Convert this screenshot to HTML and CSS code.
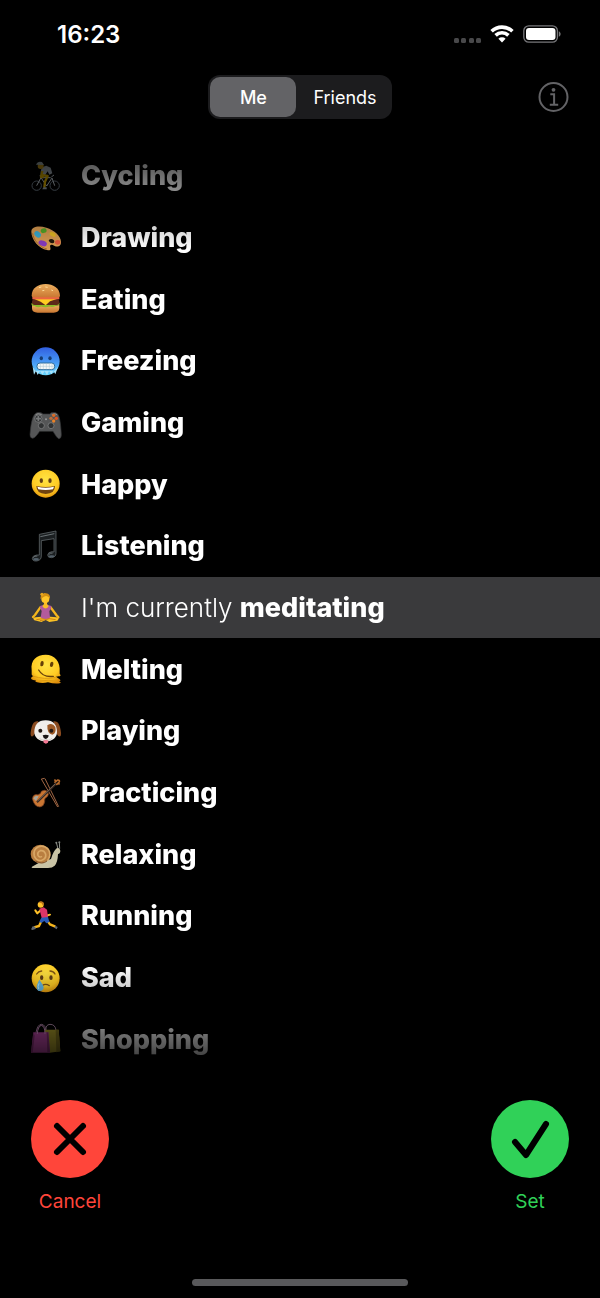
FILE: index.html
```html
<!DOCTYPE html>
<html lang="en">
<head>
    <meta charset="UTF-8">
    <meta name="viewport" content="width=device-width, initial-scale=1.0">
    <title>Status</title>
    <link rel="stylesheet" href="styles.css">
</head>
<body>
    <div class="status-bar">
        <span class="time">16:23</span>
        <div class="status-icons">
            <svg width="28" height="18" viewBox="0 0 28 18" fill="#48484a" aria-hidden="true">
                <rect x="1" y="13" width="5" height="5" rx="1.5"/><rect x="8" y="13" width="5" height="5" rx="1.5"/>
                <rect x="16" y="13" width="5" height="5" rx="1.5"/><rect x="23" y="13" width="5" height="5" rx="1.5"/>
            </svg>
            <svg width="24" height="18" viewBox="0 0 24 18" fill="none" stroke="#fff" stroke-width="3.6" aria-hidden="true">
                <path d="M1.6 6.3a15 15 0 0 1 20.8 0"/>
                <path d="M5.6 10.4a9.2 9.2 0 0 1 12.8 0"/>
                <path d="M12 17.6l-3.6-3.8a5.1 5.1 0 0 1 7.2 0z" fill="#fff" stroke="none"/>
            </svg>
            <svg width="38" height="18" viewBox="0 0 38 18" aria-hidden="true">
                <rect x=".8" y=".8" width="33.6" height="16.4" rx="5" fill="none" stroke="#77777a" stroke-width="1.3"/>
                <rect x="3" y="3" width="29.5" height="12" rx="3" fill="#fff"/>
                <path d="M35.8 6.2c2.4 1 2.4 4.6 0 5.6z" fill="#77777a"/>
            </svg>
        </div>
    </div>

    <div class="toolbar">
        <div class="segmented">
            <button class="segment active" type="button" aria-pressed="true">Me</button>
            <button class="segment" type="button" aria-pressed="false">Friends</button>
        </div>
        <button class="info-btn" type="button" aria-label="Info">
            <svg width="31" height="31" viewBox="0 0 31 31" fill="none" stroke="#636366" stroke-width="2">
                <circle cx="15.5" cy="15" r="14"/>
                <path d="M12.3 12.3h3.8v10M11.8 22.8h8.4"/>
                <circle cx="15.5" cy="7.8" r="1.9" fill="#636366" stroke="none"/>
            </svg>
        </button>
    </div>

    <ul class="activity-list">
        <li><button class="activity" type="button">
            <svg class="emoji" viewBox="0 0 90 90" aria-hidden="true">
                <g fill="none" stroke="#65727e" stroke-width="3"><circle cx="17" cy="74" r="14"/><circle cx="71" cy="74" r="14"/></g>
                <path d="M17 74l13-24 17 25 16-24 8 23M30 50h29M26 44h9M61 48l8-6" fill="none" stroke="#b9c2c9" stroke-width="3"/>
                <path d="M29 32q1-15 17-18l13 6 5 17-9 4-5-10-9 13-12 1z" fill="#a0aab4"/>
                <path d="M31 42l19 3-8 17-2 18M34 30l-4 18h8" fill="none" stroke="#c9a000" stroke-width="7" stroke-linejoin="round"/>
                <path d="M37 79h10v6H34z" fill="#8b969c"/>
                <circle cx="29" cy="15" r="9" fill="#c69a17"/>
                <path d="M15 11Q20-1 33 3l6 9z" fill="#a9b8bd"/>
            </svg>
            <strong>Cycling</strong></button></li>
        <li><button class="activity" type="button">
            <svg class="emoji" viewBox="0 0 90 90" aria-hidden="true">
                <path d="M1 26C1 10 24 7 46 14c25 8 43 24 44 42 1 12-9 18-19 13-10-6-16-5-13 5 2 7-2 9-10 7C24 77 1 50 1 26z" fill="#d79a51"/>
                <path d="M5 31c1 19 22 43 43 47" fill="none" stroke="#a86b2c" stroke-width="3"/>
                <path d="M53 52q7-8 16 0 3 9-5 9-8 0-11-9z" fill="#201509"/>
                <ellipse cx="38" cy="23" rx="9" ry="7" fill="#54a927" transform="rotate(-20 38 23)"/>
                <ellipse cx="20" cy="34" rx="11" ry="8" fill="#38acd2" transform="rotate(40 20 34)"/>
                <ellipse cx="35" cy="61" rx="13" ry="8" fill="#873abf" transform="rotate(20 35 61)"/>
                <ellipse cx="65" cy="34" rx="10" ry="6" fill="#e6b923" transform="rotate(30 65 34)"/>
                <ellipse cx="80" cy="58" rx="8" ry="7" fill="#e2583e"/>
            </svg>
            <strong>Drawing</strong></button></li>
        <li><button class="activity" type="button">
            <svg class="emoji" viewBox="0 0 90 90" aria-hidden="true">
                <defs><linearGradient id="bun" x2="0" y2="1"><stop stop-color="#edb060"/><stop offset="1" stop-color="#c97732"/></linearGradient></defs>
                <path d="M3 63q42 8 82 0v10q-1 13-17 13H20Q3 86 3 73z" fill="url(#bun)"/>
                <path d="M2 57q-3 10 9 9 10 7 20 1 12 6 23 0 11 5 20-2 15 0 11-9z" fill="#8bbc28"/>
                <rect x="3" y="46" width="82" height="17" rx="8" fill="#5d2919"/>
                <path d="M8 44h72L57 52 44 64 29 53z" fill="#ffcd22"/>
                <path d="M4 38h81v8H4z" fill="#eb6542"/>
                <path d="M2 35C2 12 22 0 44 0s42 12 43 35q0 5-6 5H8q-6 0-6-5z" fill="url(#bun)"/>
                <path d="M24 11l7-2M43 9l7 1M61 18l5 2M34 20l6-1" stroke="#ffdc98" stroke-width="3"/>
            </svg>
            <strong>Eating</strong></button></li>
        <li><button class="activity" type="button">
            <svg class="emoji" viewBox="0 0 90 90" aria-hidden="true">
                <defs><linearGradient id="cold" x2="0" y2="1"><stop stop-color="#315fe0"/><stop offset=".55" stop-color="#479af4"/><stop offset="1" stop-color="#68d9ff"/></linearGradient></defs>
                <circle cx="44" cy="46" r="42" fill="url(#cold)"/>
                <ellipse cx="31" cy="37" rx="5" ry="6" fill="#163d74"/><ellipse cx="57" cy="37" rx="5" ry="6" fill="#163d74"/>
                <rect x="18" y="51" width="53" height="20" rx="9" fill="#f3f7f7" stroke="#306c9b" stroke-width="3"/>
                <path d="M20 61h49M28 53v16M37 52v18M46 52v18M55 52v18M63 53v16" stroke="#a9c4d0" stroke-width="1.5"/>
                <path d="M5 62l4 24 6-11 5 12 7-12 7 11 7-10 7 12 6-13 8 10 5-11 6 11 8-23-10 12H14z" fill="#a5e2fb"/>
            </svg>
            <strong>Freezing</strong></button></li>
        <li><button class="activity" type="button">
            <svg class="emoji" viewBox="0 0 90 90" aria-hidden="true">
                <path d="M13 17Q17 12 30 14l6 4h20l5-4q14-2 18 3 9 7 12 63 0 12-8 12-4 0-17-22H26Q12 91 5 91q-9-1-8-12Q1 26 13 17z" fill="#555657" stroke="#343536" stroke-width="2"/>
                <path d="M14 20q7-6 18 0M62 20q9-6 16 0" stroke="#8b8c8c" stroke-width="3" fill="none"/>
                <g fill="#303233" stroke="#8b8d8e" stroke-width="2"><circle cx="22" cy="32" r="11"/><circle cx="31" cy="53" r="9"/><circle cx="60" cy="53" r="9"/></g>
                <path d="M22 24v16M14 32h16" stroke="#77797a" stroke-width="5"/>
                <circle cx="68" cy="22" r="5" fill="#dc6a24"/><circle cx="76" cy="31" r="5" fill="#e0511f"/><circle cx="60" cy="31" r="5" fill="#b86e3c"/><circle cx="68" cy="39" r="5" fill="#e88127"/>
                <circle cx="45" cy="34" r="3" fill="#999"/>
            </svg>
            <strong>Gaming</strong></button></li>
        <li><button class="activity" type="button">
            <svg class="emoji" viewBox="0 0 90 90" aria-hidden="true">
                <defs><radialGradient id="face" cy=".35" r=".7"><stop stop-color="#ffe344"/><stop offset=".65" stop-color="#ffcb23"/><stop offset="1" stop-color="#dd8c0b"/></radialGradient></defs>
                <circle cx="44" cy="44" r="42" fill="url(#face)"/>
                <ellipse cx="31" cy="35" rx="5" ry="7" fill="#633f13"/><ellipse cx="57" cy="35" rx="5" ry="7" fill="#633f13"/>
                <path d="M16 51q28 6 56 0 0 23-28 24-28-1-28-24z" fill="#704310"/>
                <path d="M19 53q25 6 50 0l-3 8q-22 4-44 0z" fill="#fff"/>
            </svg>
            <strong>Happy</strong></button></li>
        <li><button class="activity" type="button">
            <svg class="emoji" viewBox="0 0 90 90" aria-hidden="true">
                <path d="M25 10L75 0v67q0 11-13 13-12 1-12-8 1-9 13-10l6 1V23l-38 6v46q0 13-14 15Q4 91 4 82q0-8 13-10h8z" fill="#1b1f21" stroke="#6e7578" stroke-width="2"/>
                <path d="M28 17l42-9M7 80q3-6 12-5M53 71q4-6 12-5" stroke="#929b9e" stroke-width="2" fill="none"/>
                <ellipse cx="15" cy="85" rx="9" ry="4" fill="#53606a"/><ellipse cx="62" cy="76" rx="9" ry="3" fill="#53606a"/>
            </svg>
            <strong>Listening</strong></button></li>
        <li><button class="activity selected" type="button" aria-current="true">
            <svg class="emoji" viewBox="0 0 90 90" aria-hidden="true">
                <path d="M28 43L12 66 6 72M59 43l17 23 6 7" fill="none" stroke="#f4b61d" stroke-width="7" stroke-linecap="round" stroke-linejoin="round"/>
                <path d="M10 82q-8-8 4-9l17-2h27l18 2q12 2 3 10l-24 4-11-6-13 6z" fill="#fac125"/>
                <path d="M16 80q30-9 58 0M27 83l26-5" stroke="#cc8416" stroke-width="3" fill="none"/>
                <path d="M27 39l12-4h10l12 4q1 8-6 15l2 20-13 4-15-4 3-20q-7-8-5-15z" fill="#b35a9c"/>
                <path d="M34 40q10 13 19 0l-5-7v-9h-9v9z" fill="#f9bd24"/>
                <circle cx="43" cy="18" r="12" fill="#ffc629"/>
                <path d="M29 19q-2-13 8-15 1-6 8-3 14 2 12 17Q51 7 42 10q-5 1-13 9z" fill="#d49013"/><circle cx="33" cy="4" r="5" fill="#e7a51e"/>
            </svg>
            <span>I'm currently <strong>meditating</strong></span></button></li>
        <li><button class="activity" type="button">
            <svg class="emoji" viewBox="0 0 90 90" aria-hidden="true">
                <path d="M2 48C-2 18 17 2 44 2s45 21 42 52q-1 6 2 8 3 4-5 5l-8 1 10 7q7 5-1 7 9 5 2 6-17 2-35-3-16 4-33 0-8-2-3-6-13 0-15-6-1-3 8-6-8-4-6-7z" fill="url(#face)"/>
                <ellipse cx="33" cy="29" rx="5" ry="8" fill="#664108" transform="rotate(10 33 29)"/><ellipse cx="62" cy="31" rx="5" ry="8" fill="#664108" transform="rotate(15 62 31)"/>
                <path d="M23 48q13 23 44 19" fill="none" stroke="#6b430b" stroke-width="4" stroke-linecap="round"/>
                <path d="M4 66q38 12 70 4M25 81q27-5 54 1" fill="none" stroke="#de9a12" stroke-width="3"/>
            </svg>
            <strong>Melting</strong></button></li>
        <li><button class="activity" type="button">
            <svg class="emoji" viewBox="0 0 90 90" aria-hidden="true">
                <path d="M22 16Q7 12 2 34q-5 19-2 26 5 5 12-8zM67 16q15-4 20 18 5 19 2 26-6 5-13-8z" fill="#8a4b20"/>
                <path d="M44 13c23 0 34 14 34 35 0 17-13 27-34 29C23 75 10 65 10 48c0-21 11-35 34-35z" fill="#f1eeeb"/>
                <path d="M49 28q15-10 24 5 4 19-9 23-16-2-15-28z" fill="#9e5a27"/>
                <circle cx="28" cy="44" r="6" fill="#211713"/><circle cx="61" cy="44" r="6" fill="#211713"/>
                <path d="M37 72h15l-1 7q-6 8-13 0z" fill="#f47893"/>
                <path d="M25 67q13 10 19 2 7 8 19-2" fill="none" stroke="#bdb4ae" stroke-width="2"/>
                <path d="M35 58q9-4 18 0-1 10-9 11-8-2-9-11z" fill="#191516"/>
            </svg>
            <strong>Playing</strong></button></li>
        <li><button class="activity" type="button">
            <svg class="emoji" viewBox="0 0 90 90" aria-hidden="true">
                <path d="M31 3l49 84M42 2l41 84M31 3l10-2" fill="none" stroke="#a46845" stroke-width="3"/>
                <path d="M4 62Q7 47 20 50q10-1 11-10 11-7 18 0 7 10-1 17-9 3-7 14-2 14-14 16Q10 87 4 62z" fill="#c97532" stroke="#6e3a1e" stroke-width="2"/>
                <path d="M7 61q6-11 16-6l-8 14z" fill="#a7a49a"/>
                <path d="M18 73L77 15" stroke="#3b2a22" stroke-width="6"/><path d="M20 69L73 17" stroke="#a49784" stroke-width="1.5"/>
                <path d="M70 14l10-8q8 0 4 7l-8 8M74 8l-4-3M79 15l7 4" fill="none" stroke="#b66a2c" stroke-width="5"/>
            </svg>
            <strong>Practicing</strong></button></li>
        <li><button class="activity" type="button">
            <svg class="emoji" viewBox="0 0 90 90" aria-hidden="true">
                <path d="M81 30l-5-20M86 29l-1-20" stroke="#8f928b" stroke-width="3"/><circle cx="76" cy="11" r="3" fill="#838781"/><circle cx="85" cy="10" r="3" fill="#838781"/>
                <path d="M3 83l20-11 37-12q7-24 17-32 9-4 11 7 0 9-7 10-1 26-10 35-7 7-20 7H5q-5 0-2-4z" fill="#c9c3a5"/>
                <ellipse cx="28" cy="45" rx="29" ry="28" fill="#b97e40"/>
                <path d="M49 65q14-17 3-34-14-15-31-7Q5 33 10 51q6 16 22 13 14-5 12-18-4-13-16-11-10 4-7 14 4 8 12 3" fill="none" stroke="#d9a866" stroke-width="5"/>
                <path d="M48 66Q34 78 14 66" fill="none" stroke="#7e512b" stroke-width="3"/>
            </svg>
            <strong>Relaxing</strong></button></li>
        <li><button class="activity" type="button">
            <svg class="emoji" viewBox="0 0 90 90" aria-hidden="true">
                <path d="M34 55L24 75 9 79M48 58l9 12 16 7" fill="none" stroke="#f6b51c" stroke-width="7" stroke-linejoin="round"/>
                <path d="M5 76l8 1 1 7-10 3q-5-2-3-4zM73 74l7 4-3 7-7-5z" fill="#626973"/>
                <path d="M31 26L19 37l-6-9M42 28l2 17 13-4" fill="none" stroke="#ffc127" stroke-width="6" stroke-linecap="round" stroke-linejoin="round"/>
                <path d="M25 23l13-4 10 7 3 24-18 5z" fill="#dc3568"/>
                <path d="M31 50l20-2 4 15-9 4-6-7-9 6-6-4z" fill="#2959b6"/>
                <circle cx="29" cy="11" r="9" fill="#ffc22a"/><path d="M22 4q10-8 17 2l-3 8-4-7z" fill="#bc761c"/>
            </svg>
            <strong>Running</strong></button></li>
        <li><button class="activity" type="button">
            <svg class="emoji" viewBox="0 0 90 90" aria-hidden="true">
                <circle cx="44" cy="46" r="42" fill="url(#face)"/>
                <ellipse cx="32" cy="44" rx="5" ry="7" fill="#623f16"/><ellipse cx="60" cy="44" rx="5" ry="7" fill="#623f16"/>
                <path d="M17 33q5-8 15-9M57 24q11 1 15 9M33 68q11-8 22 0" fill="none" stroke="#805414" stroke-width="4" stroke-linecap="round"/>
                <path d="M25 50q-9 17-8 24 1 10 10 10t11-9Q38 67 25 50z" fill="#62b7e5"/><path d="M24 61q-5 10-1 17" stroke="#b0e8ff" stroke-width="3" fill="none"/>
            </svg>
            <strong>Sad</strong></button></li>
        <li><button class="activity" type="button">
            <svg class="emoji" viewBox="0 0 90 90" aria-hidden="true">
                <path d="M45 19Q43 2 57 1q16 0 18 18M15 26Q19 2 31 1q14 1 13 22" fill="none" stroke="#b38cad" stroke-width="3"/>
                <path d="M40 17h43l5 65-31 4z" fill="#b0a12d"/><path d="M74 17h9l5 65-12 3z" fill="#837620"/>
                <path d="M7 25h45l5 61H0z" fill="#c24bad"/><path d="M7 25l4 10-6 51H0zM47 25h5l5 61h-8z" fill="#8d337d"/>
                <path d="M19 30Q20 7 31 4q11 2 11 26" fill="none" stroke="#d994ce" stroke-width="3"/>
            </svg>
            <strong>Shopping</strong></button></li>
    </ul>

    <div class="actions">
        <button class="action cancel" type="button">
            <svg width="78" height="78" viewBox="0 0 78 78" aria-hidden="true">
                <circle cx="39" cy="39" r="39" fill="#ff453a"/>
                <path d="M26 26l26 26M52 26L26 52" stroke="#000" stroke-width="6" stroke-linecap="round"/>
            </svg>
            Cancel
        </button>
        <button class="action set" type="button">
            <svg width="78" height="78" viewBox="0 0 78 78" aria-hidden="true">
                <circle cx="39" cy="39" r="39" fill="#30d158"/>
                <path d="M24 42l11 13 20-31" fill="none" stroke="#000" stroke-width="6" stroke-linecap="round" stroke-linejoin="round"/>
            </svg>
            Set
        </button>
    </div>
    <div class="home-indicator"></div>
</body>
</html>
```
FILE: styles.css
```css
* {
    box-sizing: border-box;
}
body {
    margin: 0;
    min-height: 100vh;
    display: flex;
    flex-direction: column;
    background: #000;
    color: #fff;
    font-family: Inter, "Liberation Sans", sans-serif;
}
button {
    border: 0;
    padding: 0;
    background: none;
    color: inherit;
    font: inherit;
    cursor: pointer;
}
svg {
    display: block;
}
.status-bar {
    display: flex;
    align-items: center;
    justify-content: space-between;
    height: 68px;
    padding: 0 39px 0 57px;
}
.time {
    font-size: 24px;
    font-weight: 600;
}
.status-icons {
    display: flex;
    gap: 9px;
}
.toolbar {
    display: grid;
    grid-template-columns: 1fr auto 1fr;
    align-items: center;
    padding: 7px 31px 26px;
}
.segmented {
    grid-column: 2;
    display: flex;
    gap: 4px;
    padding: 2px;
    border-radius: 12px;
    background: #1c1c1e;
}
.segment {
    min-width: 86px;
    height: 40px;
    padding: 0 13px;
    border-radius: 10px;
    font-size: 18px;
}
.segment.active {
    background: #636366;
    font-weight: 500;
}
.info-btn {
    justify-self: end;
}
.activity-list {
    flex: 1;
    display: flex;
    flex-direction: column;
    margin: 0;
    padding: 0;
    list-style: none;
    /* rows fade out at both ends of the scroll area */
    mask-image: linear-gradient(rgba(0,0,0,0.2), #000 105px, #000 calc(100% - 105px), rgba(0,0,0,0.15));
}
.activity-list li {
    flex: 1;
    display: flex;
    min-height: 48px;
}
.activity {
    flex: 1;
    display: flex;
    align-items: center;
    gap: 20px;
    padding: 0 31px;
    font-size: 26px;
    font-weight: 300;
    text-align: left;
}
.activity.selected {
    background: #3a3a3c;
}
.activity strong {
    font-size: 27px;
    font-weight: 800;
}
.emoji {
    width: 30px;
    height: 30px;
    flex: none;
    overflow: visible;
}
.actions {
    display: flex;
    justify-content: space-between;
    padding: 30px 31px 65px;
}
.action {
    display: flex;
    flex-direction: column;
    align-items: center;
    gap: 12px;
    font-size: 19px;
    line-height: 24px;
}
.cancel {
    color: #ff453a;
}
.set {
    color: #30d158;
}
.home-indicator {
    width: 36%;
    height: 7px;
    margin: 0 auto 12px;
    border-radius: 4px;
    background: #59595b;
}
```
